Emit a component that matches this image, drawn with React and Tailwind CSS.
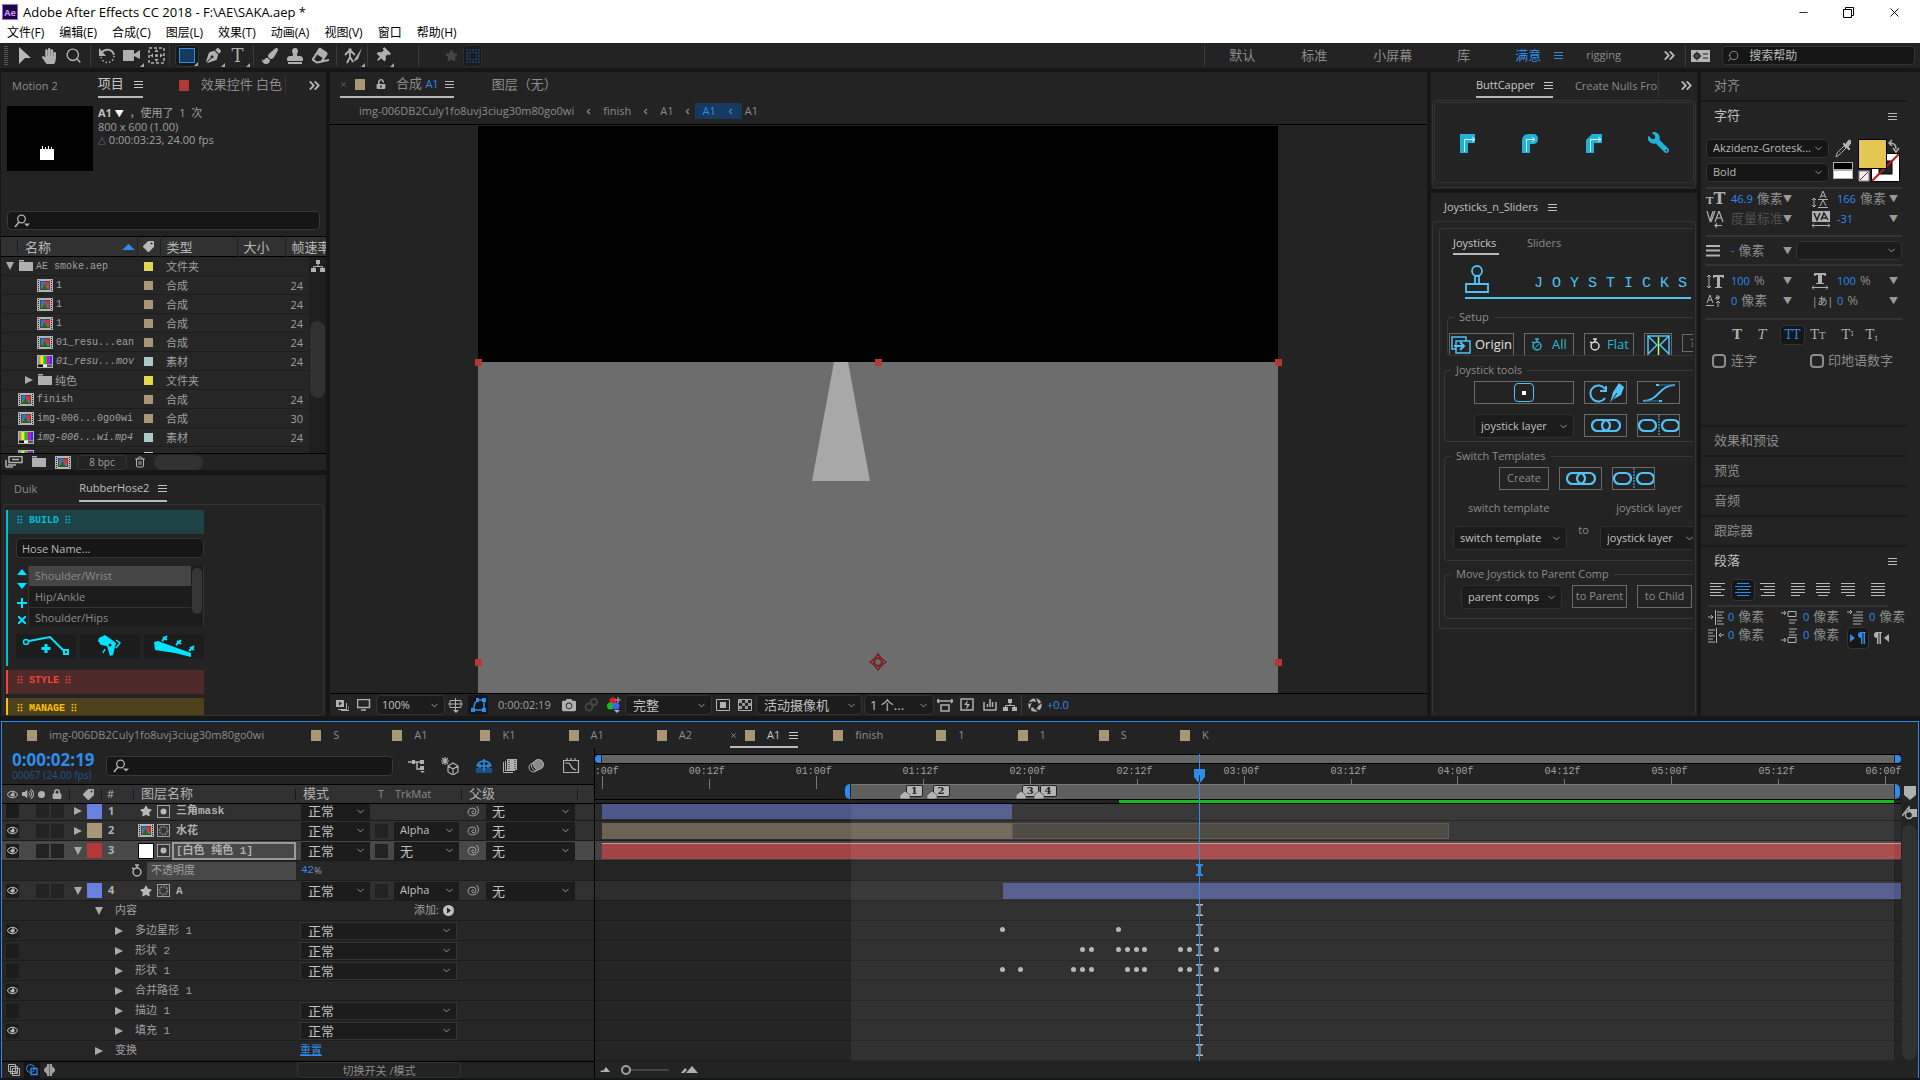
import React from 'react';
import {
  FaCamera,
  FaEraser,
  FaHandPaper,
  FaLock,
  FaPaintBrush,
  FaPenNib,
  FaRegEye,
  FaStamp,
  FaStar,
  FaTag,
  FaThumbtack,
  FaUnlockAlt,
  FaVolumeUp,
  FaWrench,
} from 'react-icons/fa';
import { ChevronDown, ChevronLeft, ChevronsRight, Minus, Search, Trash2, X } from 'lucide-react';

const MONO = "[font-family:'Liberation_Mono','Noto_Sans_CJK_SC',monospace]";
const SERIF = "[font-family:'DejaVu_Serif','Liberation_Serif',serif]";

// ---------- shared bits ----------

function Svg({ w, h, children, className = '' }) {
  return (
    <svg width={w} height={h} viewBox={`0 0 ${w} ${h}`} className={`shrink-0 ${className}`} fill="none" aria-hidden="true">
      {children}
    </svg>
  );
}

const PanelMenu = ({ className = '' }) => (
  <button type="button" aria-label="Panel menu" className={className}>
    <Svg w={9} h={9}>
      <path d="M0 1.5h9M0 4.5h9M0 7.5h9" stroke="currentColor" />
    </Svg>
  </button>
);

function Select({ label, value, className = '', chevron = 'right-1' }) {
  return (
    <span className={`relative flex shrink-0 items-center ${className}`}>
      <select aria-label={label} className="h-full w-full appearance-none bg-transparent pr-4 outline-none">
        <option>{value}</option>
      </select>
      <ChevronDown size={11} className={`pointer-events-none absolute text-[#a0a0a0] ${chevron}`} />
    </span>
  );
}

const SearchGlyph = () => (
  <Svg w={17} h={14}>
    <circle cx="7.5" cy="5" r="3.8" stroke="#b0b0b0" strokeWidth="1.3" />
    <path d="M5 8L1 13" stroke="#b0b0b0" strokeWidth="1.6" />
    <path d="M10 9.5h6l-3 3z" fill="#b0b0b0" />
  </Svg>
);

const CompIcon = () => (
  <Svg w={16} h={13}>
    <rect width="16" height="13" fill="#b4b4b4" />
    <path d="M1.5 1v11M14.5 1v11" stroke="#222" strokeDasharray="1 1" />
    <rect x="3.5" y="2.5" width="9" height="8" fill="#777" stroke="#444" />
    <circle cx="6" cy="4.5" r="2.3" fill="#2277dd" />
    <rect x="8" y="3" width="4.5" height="4.5" fill="#e03030" />
    <path d="M7.5 5l3 5h-6z" fill="#117722" />
  </Svg>
);

const FootageIcon = () => (
  <Svg w={16} h={13}>
    <rect width="16" height="13" fill="#b4b4b4" />
    <path d="M1 1h2.5v8H1z" fill="#999" />
    <path d="M3.500 1h3v8h-3z" fill="#f5ee00" />
    <path d="M6.500 1h3v8h-3z" fill="#00d020" />
    <path d="M9.500 1h3v8h-3z" fill="#ee00a8" />
    <path d="M12.500 1H15v8h-2.500z" fill="#3030ff" />
    <path d="M1 9.500h5v2.500H1z" fill="#111" />
    <path d="M6 9.500h4v2.500H6z" fill="#eee" />
    <path d="M10 9.500h5v2.500h-5z" fill="#555" />
  </Svg>
);

const FolderIcon = () => (
  <Svg w={14} h={12}>
    <path d="M0 0h5v1.500H0zM0 2h14v9H0z" fill="#b0b0b0" />
  </Svg>
);

const Twirl = ({ open }) => (
  <Svg w={8} h={8}>
    <path d={open ? 'M0 0h8L4 8z' : 'M0 0l8 4-8 4z'} fill="#aaa" />
  </Svg>
);

const FlowIcon = () => (
  <Svg w={14} h={13}>
    <path d="M5 0h4v4H5zM0 8h5v4H0zM9 8h5v4H9z" fill="#b0b0b0" />
    <path d="M7 4v2.500M2.500 8V6.500h9V8" stroke="#b0b0b0" />
  </Svg>
);

// ---------- title, menus, tools ----------

const MENUS = ['文件(F)', '编辑(E)', '合成(C)', '图层(L)', '效果(T)', '动画(A)', '视图(V)', '窗口', '帮助(H)'];

function TitleBar() {
  return (
    <header className="h-[43px] shrink-0 bg-white text-[12px] text-black">
      <div className="flex h-6 items-center">
        <div className="ml-[2px] flex h-4 w-4 items-center justify-center border border-[#9a6be0] bg-[#1f0740] text-[9px] leading-none font-bold text-[#cf96fd]">
          Ae
        </div>
        <h1 className="ml-[5px] text-[13px] leading-5">Adobe After Effects CC 2018 - F:\AE\SAKA.aep *</h1>
        <div className="ml-auto flex items-center gap-[33px] pr-[18px]">
          <button type="button" aria-label="Minimize"><Minus size={13} strokeWidth={1.5} /></button>
          <button type="button" aria-label="Restore">
            <Svg w={11} h={11}><path d="M.500 2.500h8v8h-8zM2.500 2.500v-2h8v8h-2" stroke="#000" /></Svg>
          </button>
          <button type="button" aria-label="Close"><X size={15} strokeWidth={1.5} /></button>
        </div>
      </div>
      <nav className="flex h-[18px] items-center gap-[15px] pl-[7px]">
        {MENUS.map((m) => (
          <button key={m} type="button" className="leading-[18px]">{m}</button>
        ))}
      </nav>
    </header>
  );
}

const Sep = () => <span className="h-[21px] w-px shrink-0 bg-[#3a3a3a]" />;

function Tool({ label, children, corner, active, className = 'w-[25px]' }) {
  return (
    <button
      type="button"
      aria-label={label}
      className={`relative flex h-[22px] shrink-0 items-center justify-center ${active ? 'rounded-sm border border-[#333] bg-[#161616]' : ''} ${className}`}
    >
      {children}
      {corner && (
        <svg width="4" height="4" className="absolute right-0 bottom-0"><path d="M4 0v4H0z" fill="#aaa" /></svg>
      )}
    </button>
  );
}

function Toolbar() {
  return (
    <div className="flex h-[25px] shrink-0 items-center bg-[#232323] text-[#b0b0b0]">
      <Svg w={4} h={19} className="ml-1">
        <path d="M2 0v19" stroke="#555" strokeWidth="4" strokeDasharray="1 1" />
      </Svg>
      <Tool label="Selection" className="ml-1 w-6">
        <Svg w={13} h={17}><path d="M1 0l12 11H7l-6 6z" fill="#b8b8b8" /></Svg>
      </Tool>
      <Tool label="Hand"><FaHandPaper size={16} /></Tool>
      <Tool label="Zoom"><Search size={17} strokeWidth={2} /></Tool>
      <span className="w-1" /><Sep />
      <Tool label="Rotate" className="ml-1 w-6">
        <Svg w={17} h={17}>
          <path d="M3 5a7 7 0 0 1 12 3" stroke="#b0b0b0" strokeWidth="2" />
          <path d="M15 9a6.500 6.500 0 1 1-13 0" stroke="#b0b0b0" strokeWidth="1.5" strokeDasharray="1.5 2" />
          <path d="M0 1v8h7z" fill="#b0b0b0" />
        </Svg>
      </Tool>
      <Tool label="Camera" corner>
        <Svg w={18} h={14}><path d="M0 1h11v4l6-4v9l-6-3v5H0z" fill="#b0b0b0" /></Svg>
      </Tool>
      <Tool label="Pan behind">
        <Svg w={17} h={17}>
          <rect x="1" y="1" width="15" height="15" stroke="#b0b0b0" strokeWidth="1.500" strokeDasharray="3 2" />
          <path d="M8.500 2l2 3h-4zM8.500 15l2-3h-4zM2 8.500l3-2v4zM15 8.500l-3-2v4z" fill="#b0b0b0" />
          <circle cx="8.500" cy="8.500" r="1.500" fill="#b0b0b0" />
        </Svg>
      </Tool>
      <Sep />
      <Tool label="Rectangle" active corner className="ml-[5px] w-6">
        <span className="h-[15px] w-4 border border-[#2d8ceb] bg-[#16395e]" />
      </Tool>
      <Tool label="Pen" corner className="ml-[2px] w-6"><FaPenNib size={15} /></Tool>
      <Tool label="Type" corner><span className={`text-[18px] leading-none ${SERIF}`}>T</span></Tool>
      <span className="w-[3px]" /><Sep />
      <Tool label="Brush" className="ml-1 w-6"><FaPaintBrush size={16} /></Tool>
      <Tool label="Clone stamp"><FaStamp size={16} /></Tool>
      <Tool label="Eraser"><FaEraser size={17} className="-rotate-12" /></Tool>
      <span className="w-1" /><Sep />
      <Tool label="Roto brush" corner className="ml-1 w-6">
        <Svg w={19} h={17}>
          <circle cx="6" cy="3" r="1.800" fill="#b0b0b0" />
          <path d="M1 8l3-3h4l3 3M6 5v5l-3 6M6 10l3 5" stroke="#b0b0b0" strokeWidth="1.800" />
          <path d="M18 1l-6 9-3 5 5-3z" fill="#b0b0b0" />
        </Svg>
      </Tool>
      <span className="w-[2px]" /><Sep />
      <Tool label="Puppet pin" corner className="ml-[2px] w-6"><FaThumbtack size={15} className="rotate-45" /></Tool>
      <span className="w-6" /><Sep />
      <Tool label="Shape" className="ml-5 w-6 text-[#444]"><FaStar size={13} /></Tool>
      <Tool label="Mask" className="w-[19px] rounded-sm border border-[#2c2c2c] bg-[#1a1a1a]">
        <Svg w={14} h={14}>
          <path d="M0 1h14M0 4h14M0 7h14M0 10h14M0 13h14" stroke="#17395e" strokeWidth="2" strokeDasharray="2 1" />
          <circle cx="7" cy="7" r="4" fill="#1a1a1a" stroke="#17395e" />
        </Svg>
      </Tool>

      <div className="ml-auto flex items-center text-[13px] text-[#8c8c8c]">
        <Sep />
        <button type="button" className="ml-6">默认</button>
        <button type="button" className="ml-[46px]">标准</button>
        <button type="button" className="ml-[46px]">小屏幕</button>
        <button type="button" className="ml-[45px]">库</button>
        <button type="button" className="ml-[45px] text-[#2d8ceb]">满意</button>
        <PanelMenu className="ml-[13px] text-[#2d8ceb]" />
        <button type="button" className="ml-[23px] text-[11px]">rigging</button>
        <ChevronsRight size={17} strokeWidth={2.5} className="ml-10 text-[#b8b8b8]" />
        <span className="w-[7px]" /><Sep />
        <button type="button" aria-label="Workspace settings" className="ml-[5px]">
          <Svg w={19} h={12}>
            <rect width="19" height="12" fill="#b4b4b4" />
            <circle cx="6" cy="6" r="2.500" stroke="#222" strokeWidth="1.500" />
            <path d="M6 1.500v9M1.500 6h9M12 4h5M12 8h5" stroke="#222" />
          </Svg>
        </button>
        <label className="mr-[5px] ml-3 flex h-[19px] w-[193px] items-center rounded-sm border border-[#333] bg-[#161616] pl-1 text-[12px]">
          <Search size={14} strokeWidth={1.500} className="-scale-x-100 text-[#b0b0b0]" />
          <input aria-label="搜索帮助" placeholder="搜索帮助" className="ml-[10px] w-full bg-transparent outline-none placeholder:text-[#b8b8b8]" />
        </label>
      </div>
    </div>
  );
}

// ---------- project ----------

const SWATCH = { yellow: 'bg-[#e3d84c]', sand: 'bg-[#a89677]', teal: 'bg-[#a9cac7]' };

const PROJECT_ITEMS = [
  { indent: 'pl-[5px]', twirl: 'open', kind: 'folder', name: 'AE smoke.aep', swatch: 'yellow', type: '文件夹' },
  { indent: 'pl-[36px]', kind: 'comp', name: '1', swatch: 'sand', type: '合成', fps: 24 },
  { indent: 'pl-[36px]', kind: 'comp', name: '1', swatch: 'sand', type: '合成', fps: 24 },
  { indent: 'pl-[36px]', kind: 'comp', name: '1', swatch: 'sand', type: '合成', fps: 24 },
  { indent: 'pl-[36px]', kind: 'comp', name: '01_resu...ean', swatch: 'sand', type: '合成', fps: 24 },
  { indent: 'pl-[36px]', kind: 'footage', name: '01_resu...mov', swatch: 'teal', type: '素材', fps: 24 },
  { indent: 'pl-[24px]', twirl: 'closed', kind: 'folder', name: '纯色', cjk: true, swatch: 'yellow', type: '文件夹' },
  { indent: 'pl-[17px]', kind: 'comp', name: 'finish', swatch: 'sand', type: '合成', fps: 24 },
  { indent: 'pl-[17px]', kind: 'comp', name: 'img-006...0go0wi', swatch: 'sand', type: '合成', fps: 30 },
  { indent: 'pl-[17px]', kind: 'footage', name: 'img-006...wi.mp4', swatch: 'teal', type: '素材', fps: 24 },
  { indent: 'pl-[17px]', kind: 'footage', name: '', swatch: 'teal', type: '' },
];

function ProjectPanel() {
  return (
    <section className="flex h-[398px] shrink-0 flex-col overflow-hidden bg-[#232323]">
      <div className="flex h-[26px] shrink-0 items-stretch text-[13px] whitespace-nowrap text-[#8c8c8c]">
        <button type="button" className="mt-[2px] ml-[11px] shrink-0 text-[11px]">Motion 2</button>
        <div className="ml-10 flex shrink-0 items-center gap-[10px] border-b-2 border-[#b8b8b8] text-[#c8c8c8]">
          <button type="button">项目</button>
          <PanelMenu />
        </div>
        <span className="ml-[36px] h-[11px] w-[10px] shrink-0 self-center bg-[#b53838]" />
        <button type="button" className="ml-3 shrink-0">效果控件 白色</button>
        <span className="ml-[3px] h-5 w-px self-center bg-[#333]" />
        <ChevronsRight size={17} strokeWidth={2.5} className="mr-[3px] ml-auto shrink-0 self-center text-[#b8b8b8]" />
      </div>

      <div className="mt-2 flex shrink-0 pl-[6px] text-[11px] text-[#a0a0a0]">
        <div className="flex h-[65px] w-[86px] items-end justify-center bg-black pr-[5px] pb-[11px]">
          <Svg w={15} h={14}><path d="M0 3h2V0h1v3h2V1h1v2h2V0h1v3h2V1h1v2h2v11H0z" fill="#fff" /></Svg>
        </div>
        <div className="ml-[5px] leading-[13px]">
          <p><b className="text-[#c0c0c0]">A1</b> <span className="text-[9px] text-white">▼</span>&nbsp; ，使用了&nbsp; 1&nbsp; 次</p>
          <p>800 x 600 (1.00)</p>
          <p><span className="text-[8px]">△</span> 0:00:03:23, 24.00 fps</p>
        </div>
      </div>

      <label className="mt-10 mr-[6px] ml-[6px] flex h-[19px] shrink-0 items-center rounded-sm border border-[#383838] bg-[#161616] pl-[6px]">
        <SearchGlyph />
        <input aria-label="Search project" className="w-full bg-transparent text-[11px] text-[#b8b8b8] outline-none" />
      </label>

      <div className="mt-[6px] flex min-h-0 flex-1">
        <div className="min-w-0 flex-1 overflow-hidden">
          <table className="w-full table-fixed text-left text-[11px] text-[#a0a0a0]">
            <thead>
              <tr className="h-5 border-y border-black bg-[#313131] text-[13px] leading-4 text-[#b8b8b8]">
                <th className="w-[136px] p-0 font-normal">
                  <span className="flex items-center pr-[2px] pl-4">
                    <span className="h-3 w-px bg-[#1a1a1a]" />
                    <span className="ml-[7px] flex-1">名称</span>
                    <Svg w={13} h={6}><path d="M0 6L6.500 0 13 6z" fill="#2d8ceb" /></Svg>
                  </span>
                </th>
                <th className="w-[23px] border-l border-[#222] p-0 font-normal"><FaTag size={11} className="mx-auto -scale-x-100" aria-label="Label" /></th>
                <th className="w-[77px] border-l border-[#222] p-0 pl-[6px] font-normal">类型</th>
                <th className="w-[48px] border-l border-[#222] p-0 pl-[6px] font-normal">大小</th>
                <th className="overflow-hidden border-l border-[#222] p-0 pl-[6px] font-normal whitespace-nowrap">帧速率</th>
              </tr>
            </thead>
            <tbody>
              {PROJECT_ITEMS.map((item, i) => (
                <tr key={i} className="h-[19px] border-b border-[#1d1d1d] bg-[#262626]">
                  <td className="p-0">
                    <span className={`flex items-center ${item.indent}`}>
                      {item.twirl && <span className="mr-[5px]"><Twirl open={item.twirl === 'open'} /></span>}
                      {item.kind === 'folder' && <FolderIcon />}
                      {item.kind === 'comp' && <CompIcon />}
                      {item.kind === 'footage' && <FootageIcon />}
                      <span className={`ml-[3px] leading-[13px] whitespace-nowrap ${item.cjk ? 'text-[11px]' : `text-[10px] ${MONO}`} ${item.kind === 'footage' ? 'italic' : ''}`}>
                        {item.name}
                      </span>
                    </span>
                  </td>
                  <td className="p-0"><span className={`mx-auto block h-[9px] w-[9px] ${SWATCH[item.swatch]}`} /></td>
                  <td className="p-0 pl-[6px] leading-[13px]">{item.type}</td>
                  <td className="p-0" />
                  <td className="p-0 pr-[23px] text-right leading-[13px]">{item.fps}</td>
                </tr>
              ))}
            </tbody>
          </table>
        </div>
      </div>
      <div className="relative flex h-[17px] shrink-0 items-center border-t border-black pl-1">
        {/* scroll bar and flowchart button float over the list's right edge */}
        <div className="absolute right-0 bottom-[17px] flex h-[196px] w-[17px] flex-col items-center bg-[#1e1e1e] pt-[3px]">
          <FlowIcon />
          <span className="mt-[48px] h-[77px] w-[15px] rounded-full bg-[#313131]" />
        </div>
        <Svg w={18} h={12}>
          <path d="M4 .5h13v6H4zM7 3.500h7M1 4v7M3 9h8M1 11h7" stroke="#b0b0b0" strokeWidth="1.500" />
        </Svg>
        <span className="ml-[9px]"><FolderIcon /></span>
        <span className="ml-[9px]"><CompIcon /></span>
        <button type="button" className="ml-[6px] h-[15px] w-[50px] rounded-sm border border-[#333] text-[10px] leading-none text-[#a0a0a0]">8 bpc</button>
        <Trash2 size={12} className="ml-[7px] text-[#b0b0b0]" />
        <span className="ml-2 h-[15px] w-[49px] rounded-full bg-[#313131]" />
      </div>
    </section>
  );
}

// ---------- rubber hose ----------

function HoseHeader({ title, tone }) {
  return (
    <h2 className={`flex h-6 w-[198px] items-center border-l-2 pb-1 pl-[9px] text-[10px] font-bold ${MONO} ${tone}`}>
      ⁝⁝ {title} ⁝⁝
    </h2>
  );
}

function RubberHosePanel() {
  return (
    <section className="flex min-h-0 flex-1 flex-col overflow-hidden bg-[#232323]">
      <div className="flex h-[27px] shrink-0 text-[11px] text-[#8c8c8c]">
        <button type="button" className="ml-[13px] pt-[2px]">Duik</button>
        <div className="ml-[42px] flex items-center gap-[9px] border-b-2 border-[#b8b8b8] pt-[2px] text-[#c0c0c0]">
          <button type="button">RubberHose2</button>
          <PanelMenu />
        </div>
      </div>
      <div className="mt-[2px] mr-[2px] ml-[2px] flex min-h-0 flex-1 flex-col overflow-hidden rounded-sm border border-[#333] pt-[5px] pl-[2px]">
        <div className="h-[156px] w-[198px] shrink-0 border-l-2 border-[#00bcd4]">
          <h2 className={`flex h-6 items-center bg-[#1d4347] pb-1 pl-[9px] text-[10px] font-bold text-[#00bcd4] ${MONO}`}>⁝⁝ BUILD ⁝⁝</h2>
          <input
            aria-label="Hose name"
            placeholder="Hose Name..."
            className="mt-1 ml-2 block h-5 w-[188px] rounded-sm border border-[#333] bg-[#161616] px-[5px] text-[11px] placeholder:text-[#b8b8b8]"
          />
          <div className="mt-2 ml-2 flex h-[60px] overflow-hidden">
            <div className="flex w-3 flex-col items-center justify-between pt-[3px] pb-[2px]">
              <Svg w={10} h={6}><path d="M0 6l5-6 5 6z" fill="#00e5ff" /></Svg>
              <Svg w={10} h={6}><path d="M0 0l5 6 5-6z" fill="#00e5ff" /></Svg>
              <Svg w={10} h={10}><path d="M5 0v10M0 5h10" stroke="#00e5ff" strokeWidth="2" /></Svg>
              <Svg w={8} h={8}><path d="M0 0l8 8M8 0L0 8" stroke="#00e5ff" strokeWidth="2" /></Svg>
            </div>
            <ul className="w-[163px] border-l border-[#333] bg-[#1c1c1c] text-[11px] leading-5 text-[#8c8c8c]">
              <li className="bg-[#454545] pl-[6px]">Shoulder/Wrist</li>
              <li className="mt-px border-b border-[#333] pl-[6px]">Hip/Ankle</li>
              <li className="pl-[6px]">Shoulder/Hips</li>
            </ul>
            <div className="w-[13px] border-r border-[#333] bg-[#1c1c1c] pt-[2px] pl-px">
              <span className="block h-[46px] w-[10px] rounded-full bg-[#363636]" />
            </div>
          </div>
          <div className="mt-2 ml-2 flex gap-1">
            <button type="button" aria-label="New hose" className="flex h-6 w-[60px] items-center justify-center bg-[#1c1c1c]">
              <Svg w={48} h={22}>
                <circle cx="4" cy="7" r="2.500" stroke="#00e5ff" strokeWidth="1.500" />
                <path d="M7 6l21-4 14 14" stroke="#00e5ff" strokeWidth="2" />
                <path d="M42 15h4v4h-4z" stroke="#00e5ff" strokeWidth="2" />
                <path d="M24 9v9M19.500 13.500h9" stroke="#00e5ff" strokeWidth="3" />
              </Svg>
            </button>
            <button type="button" aria-label="Rubber rig" className="flex h-6 w-[60px] items-center justify-center bg-[#1c1c1c]">
              <Svg w={24} h={22}>
                <path d="M1 3l6-3 7 5 4 3-3 12-3 1-3-10-6-1-3-4z" fill="#00e5ff" />
                <path d="M18 5l4 3-4 5M7 14l-2 4" stroke="#00e5ff" strokeWidth="1.500" />
                <circle cx="12" cy="10" r="1.500" fill="#1c1c1c" />
              </Svg>
            </button>
            <button type="button" aria-label="Rubber pin" className="flex h-6 w-[60px] items-center justify-center bg-[#1c1c1c]">
              <Svg w={42} h={22}>
                <path d="M1 7l4-1 19 7 14 5v4l-16-4-20-3z" fill="#00e5ff" />
                <path d="M9 6l5-5M10 2l4 3M23 10l5-5M24 6l4 3M36 16l5-5M37 12l4 3" stroke="#00e5ff" strokeWidth="2" />
              </Svg>
            </button>
          </div>
        </div>
        <div className="mt-1 shrink-0"><HoseHeader title="STYLE" tone="border-[#f44336] bg-[#4e2a29] text-[#f44336]" /></div>
        <div className="mt-1"><HoseHeader title="MANAGE" tone="border-[#ffc107] bg-[#4e421c] text-[#ffc107]" /></div>
      </div>
    </section>
  );
}

// ---------- viewer ----------

function CompositionView() {
  return (
    <svg width="800" height="568" viewBox="0 0 800 568" className="shrink-0 overflow-visible" role="img" aria-label="A1">
      <rect width="800" height="568" fill="#6d6d6d" />
      <rect width="800" height="236" fill="#000" />
      <path d="M356 236h14l22 119h-58z" fill="#a8a8a8" />
      <path d="M-3 233h7v7h-7zM397 233h7v7h-7zM797 233h7v7h-7zM-3 533h7v7h-7zM797 533h7v7h-7z" fill="#b53838" />
      <g stroke="#7a2222" fill="none" strokeWidth="1.500">
        <circle cx="400" cy="536" r="3.500" />
        <path d="M400 528l3 4h-6zM400 544l3-4h-6zM392 536l4-3v6zM408 536l-4-3v6z" />
      </g>
    </svg>
  );
}

function ViewerPanel() {
  const box = 'h-5 rounded-sm border border-[#333] bg-[#1c1c1c] text-[13px] text-[#c0c0c0]';
  return (
    <section className="flex min-w-0 flex-1 flex-col bg-[#232323]">
      <div className="flex h-[26px] shrink-0 text-[13px] text-[#8c8c8c]">
        <div className="ml-[10px] flex items-center border-b-2 border-[#b8b8b8]">
          <X size={7} />
          <span className="ml-[8px] h-[11px] w-[10px] bg-[#a89677]" />
          <FaUnlockAlt size={10} className="ml-[11px] text-[#b0b0b0]" />
          <button type="button" className="ml-[10px]">合成 <span className="text-[11px] text-[#2d8ceb]">A1</span></button>
          <PanelMenu className="ml-[6px] text-[#b8b8b8]" />
        </div>
        <button type="button" className="ml-[38px]">图层（无）</button>
      </div>
      <nav className="flex h-[26px] shrink-0 items-center gap-[10px] pl-[29px] text-[11px] text-[#8c8c8c]">
        <a href="#img">img-006DB2Culy1fo8uvj3ciug30m80go0wi</a>
        <ChevronLeft size={9} strokeWidth={3} />
        <a href="#finish">finish</a>
        <ChevronLeft size={9} strokeWidth={3} />
        <a href="#a1">A1</a>
        <ChevronLeft size={9} strokeWidth={3} />
        <span className="-mx-[7px] flex h-4 items-center gap-[10px] bg-[#17395e] px-[7px] text-[#2d8ceb]">
          <a href="#a1-current">A1</a>
          <ChevronLeft size={9} strokeWidth={3} />
        </span>
        <a href="#a1-child">A1</a>
      </nav>
      <div className="flex min-h-0 flex-1 justify-center overflow-hidden border-y border-black pt-px pr-[2px]">
        <CompositionView />
      </div>
      <div className="flex h-[22px] shrink-0 items-center pl-[5px] text-[11px] text-[#b0b0b0]">
        <Svg w={14} h={12}>
          <path d="M1 1h8v7H1z" fill="#b0b0b0" /><path d="M3 10.500h8.500V4M6 11.500h8V7" stroke="#b0b0b0" />
          <path d="M4 2.500l3 2-3 2z" fill="#222" />
        </Svg>
        <Svg w={14} h={12} className="ml-2"><path d="M.5.5h12v8H.5zM4 11h5" stroke="#b0b0b0" strokeWidth="1.500" /></Svg>
        <Select label="Magnification" value="100%" className="ml-[5px] h-5 w-[69px] rounded-sm border border-[#333] bg-[#1c1c1c] pl-[5px] text-[11px] text-[#c0c0c0]" />
        <Svg w={15} h={15} className="ml-[3px]">
          <path d="M2 2.500h11v7H2zM7.500 0v12M0 6h15" stroke="#b0b0b0" /><path d="M5 12h6l-3 3z" fill="#b0b0b0" />
        </Svg>
        <span className="ml-[5px] flex h-5 w-5 items-center justify-center rounded-sm bg-[#161616]">
          <Svg w={15} h={14}>
            <path d="M2 12L4 5l3-3h6v10z" stroke="#2d8ceb" strokeWidth="1.500" />
            <path d="M0 10h4v4H0zM11 10h4v4h-4zM11 0h4v4h-4zM5 0h3v4H5z" fill="#2d8ceb" />
          </Svg>
        </span>
        <span className="ml-[10px] w-[51px] text-[#a0a0a0]">0:00:02:19</span>
        <FaCamera size={14} className="ml-[13px]" />
        <Svg w={14} h={14} className="ml-[8px]"><circle cx="5" cy="9" r="3.500" stroke="#444" strokeWidth="2" /><circle cx="10" cy="4" r="3" stroke="#444" strokeWidth="2" /></Svg>
        <Svg w={15} h={16} className="ml-[9px]">
          <circle cx="6" cy="4" r="3.500" fill="#e02020" /><circle cx="3.500" cy="9" r="3.500" fill="#10c020" /><circle cx="9" cy="9" r="3.500" fill="#4060ff" />
          <path d="M11 0v6M8 3h6" stroke="#b0b0b0" /><path d="M7 13h6l-3 3z" fill="#b0b0b0" />
        </Svg>
        <Select label="Resolution" value="完整" className={`ml-[3px] w-[87px] pl-[7px] ${box}`} />
        <Svg w={14} h={12} className="ml-1"><path d="M.5.5h13v11H.5z" stroke="#b0b0b0" /><path d="M4 3h6v6H4z" fill="#b0b0b0" /></Svg>
        <Svg w={14} h={12} className="ml-2">
          <path d="M.5.5h13v11H.5z" stroke="#b0b0b0" />
          <path d="M1 2.500h12M1 8.500h12" stroke="#999" strokeWidth="3" strokeDasharray="3 3" />
          <path d="M4 5.500h9" stroke="#999" strokeWidth="3" strokeDasharray="3 3" />
        </Svg>
        <Select label="Camera" value="活动摄像机" className={`ml-1 w-[106px] pl-[7px] ${box}`} />
        <Select label="View layout" value="1 个..." className={`ml-[2px] w-[70px] pl-[5px] ${box}`} />
        <Svg w={16} h={13} className="ml-[3px]"><path d="M4 6h8v6H4zM0 2h16M2 0L0 2l2 2M14 0l2 2-2 2" stroke="#b0b0b0" strokeWidth="1.500" /></Svg>
        <Svg w={14} h={14} className="ml-[7px]"><path d="M1 1h12v11H1z" stroke="#b0b0b0" strokeWidth="1.500" /><path d="M8 2L4 7h3l-1 5 4-6H7z" fill="#b0b0b0" /></Svg>
        <Svg w={14} h={12} className="ml-[9px]"><path d="M1 3v8h12V3M4.500 5v3M7 0v8M9.500 3v5" stroke="#b0b0b0" strokeWidth="1.500" /></Svg>
        <span className="ml-[6px]"><FlowIcon /></span>
        <span className="mx-[4px] h-5 w-px bg-[#3a3a3a]" />
        <Svg w={14} h={14} className="ml-[2px]">
          <circle cx="7" cy="7" r="5" stroke="#b0b0b0" strokeWidth="3.500" />
          <path d="M7 0l3 6M13 5l-5 4M11 13l-5-3M2 12l2-6M1 5l5-1" stroke="#232323" strokeWidth="1.500" />
        </Svg>
        <span className="ml-[5px] text-[#2d8ceb]">+0.0</span>
      </div>
    </section>
  );
}

// ---------- scripts column ----------

function ButtCapperPanel() {
  return (
    <section className="flex h-[117px] shrink-0 flex-col overflow-hidden bg-[#232323] p-px pt-0">
      <div className="flex h-[26px] shrink-0 text-[11px] whitespace-nowrap text-[#8c8c8c]">
        <div className="ml-[44px] flex shrink-0 items-center gap-[9px] border-b-2 border-[#b8b8b8] pt-[2px] text-[#c8c8c8]">
          <button type="button">ButtCapper</button>
          <PanelMenu />
        </div>
        <button type="button" className="ml-[22px] w-[84px] shrink-0 overflow-hidden border-r border-[#333] pt-[2px] text-left">Create Nulls From</button>
        <ChevronsRight size={17} strokeWidth={2.5} className="mr-px ml-auto shrink-0 self-center text-[#b8b8b8]" />
      </div>
      <div className="mt-[2px] flex-1 rounded-sm border border-[#333] p-px pb-1">
        <div className="flex h-full items-center justify-between rounded-sm border border-[#333] pr-[24px] pl-[24px]">
          <button type="button" aria-label="Butt cap"><Svg w={17} h={20}><path d="M1 1h15v9H9v10H1z" fill="#22b2d8" /><path d="M5.500 19V6.500H16M13 4l3 2.500L13 9" stroke="#d8f4fb" /></Svg></button>
          <button type="button" aria-label="Round cap"><Svg w={18} h={20}><path d="M1 20V7q1-6 6-6h5q5 0 5 5t-5 5H9v9z" fill="#22b2d8" /><path d="M5.500 19V6.500H14M11 4l3 2.500L11 9" stroke="#d8f4fb" /></Svg></button>
          <button type="button" aria-label="Bevel cap"><Svg w={18} h={20}><path d="M1 20V7l6-6h10v9H9v10z" fill="#22b2d8" /><path d="M5.500 19V6.500H16M13 4l3 2.500L13 9" stroke="#d8f4fb" /></Svg></button>
          <button type="button" aria-label="Settings"><FaWrench size={21} className="-scale-x-100 text-[#22b2d8]" /></button>
        </div>
      </div>
    </section>
  );
}

const LinkIcon = () => (
  <Svg w={30} h={14}>
    <rect x="1" y="1" width="18" height="11" rx="5.500" stroke="#4fc3f7" strokeWidth="2.200" />
    <rect x="11" y="1" width="18" height="11" rx="5.500" stroke="#4fc3f7" strokeWidth="2.200" />
  </Svg>
);

const UnlinkIcon = () => (
  <Svg w={41} h={21}>
    <rect x="1" y="5" width="17" height="11" rx="5.500" stroke="#4fc3f7" strokeWidth="2.200" />
    <rect x="24" y="5" width="17" height="11" rx="5.500" stroke="#4fc3f7" strokeWidth="2.200" />
    <path d="M21 0v21" stroke="#4fc3f7" strokeDasharray="2 1" />
  </Svg>
);

const JButton = ({ label, children, className = 'w-[43px]' }) => (
  <button type="button" aria-label={label} className={`flex h-[23px] shrink-0 items-center justify-center overflow-hidden border border-[#6a6a6a] text-[11px] text-[#8c8c8c] ${className}`}>
    {children}
  </button>
);

const Group = ({ title, className = '', children }) => (
  <fieldset className={`min-w-0 shrink-0 overflow-hidden rounded-l-sm border border-r-0 border-[#383838] text-[11px] text-[#8c8c8c] ${className}`}>
    <legend className="ml-[6px] px-[5px] leading-[14px]">{title}</legend>
    {children}
  </fieldset>
);

const Stopwatch = ({ color, slash }) => (
  <Svg w={12} h={13}>
    <circle cx="6" cy="8" r="4" stroke={color} strokeWidth="1.500" />
    <path d="M4 1h4M6 1v3M1 4l2 1" stroke={color} strokeWidth="1.500" />
    {slash && <path d="M4 10l4-4" stroke={color} />}
  </Svg>
);

function JoysticksPanel() {
  const drop = 'h-6 rounded-sm border border-[#303030] bg-[#1c1c1c] text-[11px] text-[#c0c0c0]';
  return (
    <section className="flex min-h-0 flex-1 flex-col bg-[#232323] p-px pt-0">
      <h2 className="flex h-7 shrink-0 items-center gap-[10px] pl-[12px] text-[11px] text-[#c0c0c0]">
        Joysticks_n_Sliders <PanelMenu />
      </h2>
      <div className="flex-1 overflow-hidden rounded-sm border border-b-0 border-[#333] pt-[6px] pr-[2px] pl-[6px]">
        <div className="flex h-[401px] flex-col overflow-hidden rounded-l-sm border border-r-0 border-[#383838]">
          <div className="flex h-[26px] shrink-0 text-[11px]">
            <button type="button" className="ml-[13px] w-[46px] border-b-2 border-[#b8b8b8] pt-[4px] text-left text-[#c8c8c8]">Joysticks</button>
            <button type="button" className="ml-7 pt-[2px] text-[#8c8c8c]">Sliders</button>
          </div>
          <div className="mt-[7px] mr-[2px] ml-[25px] flex h-[37px] shrink-0 items-end justify-between border-b-2 border-[#4fc3f7] pr-[4px] pb-[3px]">
            <Svg w={25} h={29}>
              <circle cx="12" cy="6" r="5" stroke="#4fc3f7" strokeWidth="1.800" />
              <path d="M10 11v8M14 11v8M1 19h22v8H1z" stroke="#4fc3f7" strokeWidth="1.800" />
            </Svg>
            <span className={`text-[15px] leading-[20px] text-[#4fc3f7] ${MONO}`}>J O Y S T I C K S</span>
          </div>

          <Group title="Setup" className="mt-[11px] ml-[7px] h-[46px]">
            <div className="flex items-start gap-[10px] pt-[9px] pl-px">
              <JButton label="Origin" className="w-[65px] gap-1 text-[13px]!">
                <Svg w={20} h={18}>
                  <path d="M5 13H1V1h14v4M5 5h14v12H5z" stroke="#4fc3f7" strokeWidth="1.500" />
                  <path d="M3 10h9M9 6l4 4-4 4" stroke="#4fc3f7" strokeWidth="2" />
                </Svg>
                <span className="text-[#e0e0e0]">Origin</span>
              </JButton>
              <JButton label="All" className="w-[50px] gap-[9px] text-[13px]!"><Stopwatch color="#29b6d8" slash /><span className="text-[#29b6d8]">All</span></JButton>
              <JButton label="Flat" className="w-[50px] gap-[6px] text-[13px]!"><Stopwatch color="#d8d8d8" /><span className="text-[#29b6d8]">Flat</span></JButton>
              <JButton label="Mirror" className="w-7">
                <Svg w={23} h={20}>
                  <path d="M1 1l9 9-9 9zM22 1l-9 9 9 9zM1 1h21" stroke="#4fc3f7" strokeWidth="1.500" />
                  <path d="M11.500 2v18" stroke="#b2ff59" strokeWidth="1.500" />
                </Svg>
              </JButton>
              <JButton label="Help" className="mt-px h-[18px]! w-[21px]">?</JButton>
            </div>
          </Group>

          <Group title="Joystick tools" className="mt-[7px] ml-1 h-[79px]">
            <div className="flex gap-[10px] pt-1 pl-[29px]">
              <JButton label="Controller" className="w-[100px]">
                <span className="flex h-[19px] w-5 items-center justify-center rounded-sm border border-[#4fc3f7]"><span className="h-1 w-1 bg-white" /></span>
              </JButton>
              <JButton label="Redraw">
                <Svg w={38} h={20}>
                  <path d="M18 6a8 8 0 1 0 0 9M13 8h6V3" stroke="#4fc3f7" strokeWidth="2" />
                  <path d="M32 0l5 4-3 8-7 4-4 4 3-11z" fill="#4fc3f7" />
                  <path d="M24 19l6-9" stroke="#232323" />
                </Svg>
              </JButton>
              <JButton label="Ease">
                <Svg w={34} h={20}>
                  <path d="M1 18c16 0 16-16 32-16" stroke="#4fc3f7" strokeWidth="1.800" />
                  <path d="M1 18h18M15 2h18" stroke="#2f7fa5" />
                  <path d="M17 17h3v2h-3zM14 1h3v2h-3z" fill="#4fc3f7" />
                </Svg>
              </JButton>
            </div>
            <div className="flex gap-[10px] pt-[10px] pl-[29px]">
              <Select label="Joystick layer" value="joystick layer" className={`w-[100px] pl-[6px] ${drop}`} />
              <JButton label="Link"><LinkIcon /></JButton>
              <JButton label="Unlink"><UnlinkIcon /></JButton>
            </div>
          </Group>

          <Group title="Switch Templates" className="mt-[7px] ml-1 h-[112px]">
            <div className="flex gap-[10px] pt-1 pl-[54px]">
              <JButton label="Create" className="w-[50px]">Create</JButton>
              <JButton label="Link switch"><LinkIcon /></JButton>
              <JButton label="Unlink switch"><UnlinkIcon /></JButton>
            </div>
            <div className="mt-[10px] flex justify-between pr-[11px] pl-[23px] leading-4">
              <span>switch template</span>
              <span>joystick layer</span>
            </div>
            <div className="mt-[8px] flex w-[300px] items-start pl-[8px]">
              <Select label="Switch template" value="switch template" className={`mt-[2px] w-[114px] pl-[6px] ${drop}`} />
              <span className="w-[33px] text-center leading-3">to</span>
              <Select label="Target layer" value="joystick layer" className={`mt-[2px] w-[100px] pl-[6px] ${drop}`} />
            </div>
          </Group>

          <Group title="Move Joystick to Parent Comp" className="mt-[6px] ml-1 h-[52px]">
            <div className="flex gap-[10px] pt-1 pl-4">
              <Select label="Parent comps" value="parent comps" className={`w-[101px] pl-[6px] ${drop}`} />
              <JButton label="to Parent" className="w-[55px] whitespace-nowrap">to Parent</JButton>
              <JButton label="to Child" className="w-[55px] whitespace-nowrap">to Child</JButton>
            </div>
          </Group>
        </div>
      </div>
    </section>
  );
}

// ---------- character & paragraph column ----------

const Caret = () => <span className="ml-auto text-[9px] text-[#9a9a9a]">▼</span>;

function Metric({ icon, value, unit, dim, caret = true, className = '' }) {
  return (
    <div className={`flex h-5 items-center text-[13px] whitespace-nowrap ${className}`}>
      <span className="flex w-[25px] shrink-0 justify-start text-[#b0b0b0]">{icon}</span>
      {value && <span className="mr-1 text-[11px] text-[#2d8ceb]">{value}</span>}
      <span className={dim ? 'text-[#505050]' : 'text-[#8c8c8c]'}>{unit}</span>
      {caret && <Caret />}
    </div>
  );
}

const PairRow = ({ children }) => <div className="grid grid-cols-[86px_86px] gap-5">{children}</div>;

function CharacterPanel() {
  const t = `leading-none ${SERIF}`;
  const font = 'h-[19px] w-[123px] rounded-sm border border-[#333] bg-[#161616] pl-[6px] text-[11px] text-[#b8b8b8]';
  return (
    <div className="mr-[18px] pl-[5px] text-[#8c8c8c]">
      <div className="mt-[9px] flex">
        <div className="flex flex-col gap-[5px]">
          <Select label="Font" value="Akzidenz-Grotesk..." className={font} />
          <Select label="Font style" value="Bold" className={font} />
        </div>
        <div className="ml-[3px] flex w-[21px] flex-col items-center gap-[2px]">
          <Svg w={17} h={19}>
            <path d="M2 18l1-4 7-7 2 2-7 7z" stroke="#b0b0b0" /><path d="M9 5l1-1 6 6-1 1zM12 5l2-3q2-2 3 0t-1 3l-2 3z" fill="#b0b0b0" stroke="#b0b0b0" />
          </Svg>
          <span className="mt-[2px] flex h-[17px] w-5 flex-col border border-[#b0b0b0] bg-white"><span className="h-2 border-b-2 border-[#b0b0b0] bg-black" /></span>
        </div>
        <Svg w={44} h={44} className="ml-1">
          <rect x="14.500" y="14.500" width="28" height="28" fill="#fff" stroke="#000" />
          <rect x="22" y="22" width="13" height="13" fill="#232323" stroke="#000" />
          <path d="M15 42L42 15" stroke="#c01515" strokeWidth="2" />
          <rect x="1.500" y=".5" width="28" height="29" fill="#e6c653" stroke="#000" />
          <rect x="2" y="32" width="10" height="10" fill="#eee" stroke="#888" />
          <path d="M3 41l8-8" stroke="#c01515" />
          <path d="M33 4q6 0 6 6M35 1l-3 3 3 3M36 9l3 4 3-4" stroke="#b0b0b0" strokeWidth="1.500" />
        </Svg>
      </div>

      <div className="mt-1 border-t-2 border-[#333]">
        <PairRow>
          <Metric icon={<span className={`font-bold ${t}`}><span className="text-[10px]">T</span><span className="text-[16px]">T</span></span>} value="46.9" unit="像素" />
          <Metric icon={<Svg w={16} h={18}><path d="M2 8v9M0 10l2-2 2 2M0 15l2 2 2-2M6 9.500h10M6 17.500h10M8 8l3-7 3 7M9 6h4M8 16l3-6 3 6" stroke="#b0b0b0" /></Svg>} value="166" unit="像素" />
        </PairRow>
        <PairRow>
          <Metric icon={<Svg w={18} h={17}><path d="M1 0l3 10L7 0M5 11L9 0M9 11l4-11 4 11M10 7h6M9 14.500h7M11 12.500l-2 2 2 2" stroke="#b0b0b0" strokeWidth="1.200" /></Svg>} unit="度量标准" dim />
          <Metric icon={<Svg w={18} h={17}><path d="M0 0h18v11H0z" fill="#b0b0b0" /><path d="M2 2l3 7 3-7M9 9l3-7 4 7M10 7h4" stroke="#222" strokeWidth="1.500" /><path d="M0 14.500h18M2 12.500l-2 2 2 2M16 12.500l2 2-2 2" stroke="#b0b0b0" /></Svg>} value="-31" unit="" />
        </PairRow>
      </div>

      <div className="mt-[6px] flex h-[31px] items-center border-y-2 border-[#333]">
        <Metric className="w-[86px]" icon={<Svg w={14} h={12}><path d="M0 1h14M0 5.500h14M0 10.500h14" stroke="#b0b0b0" strokeWidth="2" /></Svg>} value="-" unit="像素" />
        <Select label="Stroke order" value=" " className="ml-1 h-[19px] w-[106px] rounded-sm border border-[#333] bg-[#1c1c1c] text-[11px]" />
      </div>

      <div className="pt-[5px]">
        <PairRow>
          <Metric icon={<Svg w={18} h={15}><path d="M3 1v13M1 3l2-2 2 2M1 12l2 2 2-2" stroke="#b0b0b0" /><path d="M7 1h11v3h-1l-1-1h-2v10h2v1H9v-1h2V3H9L8 4H7z" fill="#b0b0b0" /></Svg>} value="100" unit="%" />
          <Metric icon={<Svg w={16} h={17}><path d="M2 0h12v3h-1l-1-1h-2v8h2v1H4v-1h2V2H4L3 3H2z" fill="#b0b0b0" /><path d="M0 14.500h16M2 12.500l-2 2 2 2M14 12.500l2 2-2 2" stroke="#b0b0b0" /></Svg>} value="100" unit="%" />
        </PairRow>
        <PairRow>
          <Metric icon={<Svg w={16} h={14}><path d="M1 9l3-8 3 8M2 6h4M0 11.500h8M12 13V7M10 9l2-2 2 2M10 2h3v3h-3V3.500h3" stroke="#b0b0b0" /></Svg>} value="0" unit="像素" />
          <Metric icon={<span className="text-[10px]">|あ|</span>} value="0" unit="%" />
        </PairRow>
      </div>

      <div className="mt-[7px] flex h-[31px] items-center border-t-2 border-[#333] pl-[19px] text-[#b0b0b0]">
        <button type="button" className={`w-6 text-[13px] font-bold ${t}`}>T</button>
        <button type="button" className={`ml-px w-6 text-[13px] italic ${t}`}>T</button>
        <button type="button" className={`ml-[6px] h-5 w-[25px] rounded-sm border border-[#333] bg-[#161616] text-[12px] text-[#2d8ceb] ${t}`}>TT</button>
        <button type="button" className={`ml-px w-6 text-[13px] ${t}`}>T<span className="text-[10px]">T</span></button>
        <button type="button" className={`ml-[6px] w-6 text-[13px] ${t}`}>T<sup className="text-[7px]">1</sup></button>
        <button type="button" className={`w-6 text-[13px] ${t}`}>T<sub className="text-[7px]">1</sub></button>
      </div>
      <div className="mt-[2px] flex h-5 items-center pl-[6px] text-[13px]">
        <label className="flex w-[98px] items-center gap-[5px]">
          <input type="checkbox" className="h-[14px] w-[14px] appearance-none rounded-sm border-2 border-[#8c8c8c]" />连字
        </label>
        <label className="flex items-center gap-1 whitespace-nowrap">
          <input type="checkbox" className="h-[14px] w-[14px] appearance-none rounded-sm border-2 border-[#8c8c8c]" />印地语数字
        </label>
      </div>
    </div>
  );
}

// line ends for each alignment glyph, top to bottom
const ALIGNMENTS = [
  { label: 'Left', d: 'M0 1h15M0 4h11M0 7h15M0 10h11M0 13h14' },
  { label: 'Center', d: 'M2 1h12M0 4h16M2 7h12M0 10h16M2 13h12', active: true },
  { label: 'Right', d: 'M0 1h15M4 4h11M0 7h15M4 10h11M1 13h14' },
  { label: 'Justify last left', d: 'M0 1h14M0 4h14M0 7h14M0 10h14M0 13h9', gap: 'ml-[6px]' },
  { label: 'Justify last center', d: 'M0 1h14M0 4h14M0 7h14M0 10h14M2 13h10' },
  { label: 'Justify last right', d: 'M0 1h14M0 4h14M0 7h14M0 10h14M5 13h9' },
  { label: 'Justify all', d: 'M0 1h14M0 4h14M0 7h14M0 10h14M0 13h14', gap: 'ml-[5px]' },
];

function ParagraphPanel() {
  return (
    <div className="pl-[5px] text-[#8c8c8c]">
      <div className="flex h-[23px] items-center">
        {ALIGNMENTS.map((a) => (
          <button
            key={a.label}
            type="button"
            aria-label={a.label}
            className={`mr-px flex h-[22px] w-6 shrink-0 items-center justify-center ${a.gap || ''} ${a.active ? 'rounded-sm border border-[#333] bg-[#161616] text-[#2d8ceb]' : 'text-[#b8b8b8]'}`}
          >
            <Svg w={16} h={15}><path d={a.d} transform="translate(0 .5)" stroke="currentColor" /></Svg>
          </button>
        ))}
      </div>
      <div className="mt-1 ml-[2px] flex w-[180px] border-t-2 border-[#333]" />
      <div className="ml-[2px] grid grid-cols-[73px_66px_60px] grid-rows-[18px_18px]">
        <Metric caret={false} className="[&>span:first-child]:w-[20px]" icon={<Svg w={16} h={15}><path d="M0 7h5M3 5l2 2-2 2M7.500 0v15M9 2h7M9 5h5M9 8h7M9 11h5M9 14h7" stroke="#b0b0b0" /></Svg>} value="0" unit="像素" />
        <Metric caret={false} className="[&>span:first-child]:w-[22px]" icon={<Svg w={16} h={15}><path d="M0 3h5M3 1l2 2-2 2M7 1.500h8v5H7zM8 10h8M8 13h6" stroke="#b0b0b0" /></Svg>} value="0" unit="像素" />
        <Metric caret={false} className="[&>span:first-child]:w-[22px]" icon={<Svg w={16} h={15}><path d="M0 2h5M3 0l2 2-2 2M9 2h7M6 5h10M6 8h10M6 11h10M6 14h8" stroke="#b0b0b0" /></Svg>} value="0" unit="像素" />
        <Metric caret={false} className="[&>span:first-child]:w-[20px]" icon={<Svg w={16} h={15}><path d="M0 2h7M0 5h5M0 8h7M0 11h5M0 14h7M8.500 0v15M16 7h-5M13 5l-2 2 2 2" stroke="#b0b0b0" /></Svg>} value="0" unit="像素" />
        <Metric caret={false} className="[&>span:first-child]:w-[22px]" icon={<Svg w={16} h={15}><path d="M8 1h8M8 4h6M8 7h8M7 9.500h8v5H7zM0 12h5M3 10l2 2-2 2" stroke="#b0b0b0" /></Svg>} value="0" unit="像素" />
        <div className="mt-2 flex items-center">
          <button type="button" aria-label="Left to right" className="flex h-[22px] w-[22px] items-center justify-center rounded-sm border border-[#333] bg-[#161616]">
            <Svg w={17} h={12}><path d="M0 2l5 4-5 4zM16 0h-5q-3 0-3 3t3 3v6h1.500V1h1v11H15V1h1z" fill="#2d8ceb" /></Svg>
          </button>
          <button type="button" aria-label="Right to left" className="ml-1">
            <Svg w={16} h={12}><path d="M16 2l-5 4 5 4zM9 0H4Q1 0 1 3t3 3v6h1.500V1h1v11H8V1h1z" fill="#b0b0b0" /></Svg>
          </button>
        </div>
      </div>
    </div>
  );
}

const Bar = ({ title, bright, menu }) => (
  <h2 className={`mr-[13px] flex h-7 items-center justify-between pr-[10px] pl-[13px] text-[13px] ${bright ? 'text-[#c0c0c0]' : 'text-[#8c8c8c]'}`}>
    {title}
    {menu && <PanelMenu className="text-[#b8b8b8]" />}
  </h2>
);

const Rule = () => <div className="mr-[13px] h-[2px] shrink-0 bg-[#191919]" />;

function RightColumn() {
  return (
    <section className="w-[219px] shrink-0 overflow-hidden bg-[#232323]">
      <Bar title="对齐" />
      <Rule />
      <Bar title="字符" bright menu />
      <div className="h-[286px]"><CharacterPanel /></div>
      {['效果和预设', '预览', '音频', '跟踪器'].map((s) => (
        <React.Fragment key={s}>
          <Rule />
          <Bar title={s} />
        </React.Fragment>
      ))}
      <Rule />
      <Bar title="段落" bright menu />
      <div className="mt-[3px]"><ParagraphPanel /></div>
    </section>
  );
}

// ---------- timeline ----------

const FIRST = -0.75;
const SPAN = 146.5;
const at = (frame) => `${((frame - FIRST) / SPAN) * 100}%`;
const between = (a, b) => `${((b - a) / SPAN) * 100}%`;

const TIMELINE_TABS = ['img-006DB2Culy1fo8uvj3ciug30m80go0wi', 'S', 'A1', 'K1', 'A1', 'A2', '*A1', 'finish', '1', '1', 'S', 'K'];

const ROWS = [
  { kind: 'layer', no: 1, name: '三角mask', icon: 'star', swatch: 'bg-[#6a80e0]', eye: false, trk: null, first: true, bars: [{ from: 0, to: 46, tone: 'bg-[#4d5788]' }] },
  { kind: 'layer', no: 2, name: '水花', icon: 'comp', swatch: 'bg-[#a89677]', eye: true, dim: true, trk: 'Alpha', bars: [{ from: 0, to: 46, tone: 'bg-[#6c6253]' }, { from: 46, to: 95, tone: 'bg-[#45403a] border border-[#5a5244]' }] },
  { kind: 'layer', no: 3, name: '[白色 纯色 1]', icon: 'solid', swatch: 'bg-[#b53838]', eye: true, open: true, selected: true, trk: '无', bars: [{ from: 0, to: 145.75, tone: 'bg-[#a44545] border-t border-[#d49090]' }] },
  { kind: 'opacity', name: '不透明度', value: '42' },
  { kind: 'layer', no: 4, name: 'A', icon: 'star', swatch: 'bg-[#6a80e0]', eye: true, dim: true, open: true, trk: 'Alpha', bars: [{ from: 45, to: 145.75, tone: 'bg-[#4d5788]' }] },
  { kind: 'contents', name: '内容' },
  { kind: 'prop', name: '多边星形 1', eye: true, mode: true, keys: [45, 58] },
  { kind: 'prop', name: '形状 2', eye: false, mode: true, keys: [54, 55, 58, 59, 60, 61, 65, 66, 69] },
  { kind: 'prop', name: '形状 1', eye: false, mode: true, keys: [45, 47, 53, 54, 55, 59, 60, 61, 65, 66, 69] },
  { kind: 'prop', name: '合并路径 1', eye: true },
  { kind: 'prop', name: '描边 1', eye: false, mode: true },
  { kind: 'prop', name: '填充 1', eye: true, mode: true },
  { kind: 'transform', name: '变换' },
];

const Eye = ({ on }) => (
  <button type="button" aria-label="Visibility" className="flex h-[14px] w-[13px] shrink-0 items-center justify-center bg-[#1c1c1c]">
    {on && <FaRegEye size={11} className="text-[#b8b8b8]" />}
  </button>
);

const Spiral = () => (
  <Svg w={13} h={13}>
    <path d="M7 6.500q-1-1.500-2 0t1 2.500q3 0 3-3t-4-3q-4 .5-4 4t4.500 4q5.500-.5 6-5 0-3-2-5" stroke="#a0a0a0" />
  </Svg>
);

function LayerRow({ row }) {
  const sel = row.selected;
  const cell = 'h-[18px] bg-[#1c1c1c] text-[13px] text-[#c0c0c0]';
  return (
    <div className={`flex items-center border-b border-[#1a1a1a] ${row.first ? 'h-[17px] overflow-hidden pb-[2px]' : 'h-5'} ${sel ? 'bg-[#484848]' : 'bg-[#303030]'}`}>
      <span className="w-1 shrink-0" />
      <Eye on={row.eye} />
      <span className="ml-[17px] h-[14px] w-[13px] shrink-0 bg-[#222]" />
      <span className="ml-[2px] h-[14px] w-[13px] shrink-0 bg-[#222]" />
      <span className="ml-[10px]"><Twirl open={row.open} /></span>
      <span className={`ml-[5px] h-[15px] w-[15px] shrink-0 ${row.swatch}`} />
      <span className="w-[36px] shrink-0 pl-[6px] text-[11px] font-bold text-[#b0b0b0]">{row.no}</span>
      <span className="flex w-4 shrink-0 items-center justify-center text-[#b8b8b8]">
        {row.icon === 'star' && <FaStar size={12} />}
        {row.icon === 'comp' && <CompIcon />}
        {row.icon === 'solid' && <span className="h-4 w-4 border border-black bg-white" />}
      </span>
      <Svg w={13} h={13} className="ml-[3px]">
        <rect x=".5" y=".5" width="12" height="12" fill="#333" stroke="#a0a0a0" />
        {row.dim
          ? <circle cx="6.500" cy="6.500" r="4" stroke="#777" strokeWidth="2" strokeDasharray="2 1" />
          : <circle cx="6.500" cy="6.500" r="3" fill="#b8b8b8" />}
      </Svg>
      <span className={`ml-[2px] flex h-[18px] w-[124px] shrink-0 items-center pl-[2px] text-[11px] leading-[14px] font-bold whitespace-pre text-[#b0b0b0] ${MONO} ${sel ? 'border-2 border-[#9a9a9a]' : 'border-2 border-transparent'}`}>
        {row.name}
      </span>
      <Select label={`${row.name} mode`} value="正常" className={`ml-[5px] w-[69px] pl-[7px] ${cell}`} />
      {row.trk ? (
        <>
          <span className="ml-[5px] h-[14px] w-[13px] shrink-0 bg-[#222]" />
          <Select label={`${row.name} track matte`} value={row.trk} className={`ml-[6px] w-[65px] pl-[6px] ${cell} ${row.trk === 'Alpha' ? 'text-[11px]!' : ''}`} />
        </>
      ) : <span className="w-[89px] shrink-0" />}
      <span className="ml-[8px]"><Spiral /></span>
      <Select label={`${row.name} parent`} value="无" className={`ml-[6px] w-[89px] pl-[6px] ${cell}`} />
    </div>
  );
}

function PropertyRow({ row }) {
  const base = 'flex h-5 items-center border-b border-[#1d1d1d] bg-[#262626] text-[11px] text-[#a0a0a0]';
  if (row.kind === 'opacity') {
    return (
      <div className={base}>
        <span className="ml-[129px]"><Stopwatch color="#b0b0b0" /></span>
        <span className="ml-1 flex h-[18px] w-[149px] items-center bg-[#484848] pl-1">{row.name}</span>
        <span className={`ml-[5px] text-[#2d8ceb] ${MONO}`}>{row.value}</span><span className="text-[9px]">%</span>
      </div>
    );
  }
  if (row.kind !== 'prop') {
    return (
      <div className={base}>
        <span className="ml-[93px]"><Twirl open={row.kind === 'contents'} /></span>
        <span className={`ml-3 ${row.kind === 'contents' ? 'w-[299px]' : 'w-[185px]'}`}>{row.name}</span>
        {row.kind === 'contents' ? (
          <button type="button" className="flex items-center gap-1">
            添加:
            <Svg w={11} h={11}><circle cx="5.500" cy="5.500" r="5.500" fill="#c0c0c0" /><path d="M4 2.500l4 3-4 3z" fill="#222" /></Svg>
          </button>
        ) : (
          <button type="button" className="text-[#2d8ceb] underline">重置</button>
        )}
      </div>
    );
  }
  return (
    <div className={base}>
      <span className="w-1 shrink-0" />
      <Eye on={row.eye} />
      <span className="ml-[96px]"><Twirl /></span>
      <span className={`ml-3 w-[165px] leading-[14px] ${MONO}`}>{row.name}</span>
      {row.mode && (
        <Select label={`${row.name} mode`} value="正常" className="h-[18px] w-[157px] border border-[#333] bg-[#1c1c1c] pl-[7px] text-[13px] leading-4 text-[#c0c0c0]" />
      )}
    </div>
  );
}

function TimelineOutline() {
  return (
    <div className="flex w-[593px] shrink-0 flex-col border-r border-black">
      <div className="flex h-9 shrink-0 items-center pl-[10px]">
        <div className="w-[94px] leading-none">
          <p className="text-[17px] leading-[19px] font-bold text-[#2d8ceb]">0:00:02:19</p>
          <p className="text-[10px] leading-[13px] text-[#1f5590]">00067 (24.00 fps)</p>
        </div>
        <label className="mb-px flex h-5 w-[287px] items-center rounded-sm border border-[#383838] bg-[#161616] pl-[6px]">
          <SearchGlyph />
          <input aria-label="Search layers" className="w-full bg-transparent text-[11px] text-[#b8b8b8] outline-none" />
        </label>
        <div className="mb-px ml-[15px] flex flex-1 items-center text-[#b0b0b0]">
          <Svg w={17} h={14}><path d="M0 3h6M7 3h5M9 3v7h4" stroke="#b0b0b0" strokeWidth="1.500" /><path d="M4 1h3v4H4zM12 1h4v4h-4zM12 7h4v4h-4zM12 12h5l-2.500 2z" fill="#b0b0b0" /></Svg>
          <Svg w={18} h={18} className="ml-4"><path d="M7 9l5-3 5 3v6l-5 3-5-3zM7 9l5 3 5-3M12 12v6M4 0v8M0 4h8M1 1l6 6M7 1L1 7" stroke="#b0b0b0" strokeWidth="1.200" /></Svg>
          <Svg w={16} h={14} className="ml-[17px]"><path d="M0 9h16v5H0z" fill="#1b4f86" /><path d="M1 7q2-5 7-5t7 5M8 0v12M1 7h14M4 5v4M12 5v4" stroke="#2d8ceb" strokeWidth="1.500" /></Svg>
          <Svg w={14} h={14} className="ml-[11px]"><path d="M4 0h10v11H4z" fill="#b0b0b0" /><path d="M.500 3v10.500H10M2.500 2v9.500H12" stroke="#b0b0b0" /><path d="M6 1v9M12 1v9" stroke="#222" strokeDasharray="1 1" /></Svg>
          <Svg w={16} h={14} className="ml-[11px]"><circle cx="5.500" cy="8.500" r="4.500" stroke="#b0b0b0" /><circle cx="8" cy="7" r="4.500" stroke="#b0b0b0" /><circle cx="10.500" cy="5.500" r="5" fill="#8a8a8a" stroke="#b0b0b0" /></Svg>
          <Svg w={17} h={15} className="ml-[19px]"><path d="M.500 2.500h15v12H.500zM4 0v2M8 0v2M12 0v2M2 5h3q2 0 3 3t5 4" stroke="#b0b0b0" strokeWidth="1.200" /></Svg>
        </div>
      </div>
      <div className="flex h-5 shrink-0 items-center border-y border-black bg-[#313131] text-[13px] text-[#b0b0b0]">
        <FaRegEye size={11} className="ml-[5px] shrink-0" />
        <FaVolumeUp size={12} className="ml-1 shrink-0" />
        <span className="ml-1 h-[7px] w-[7px] shrink-0 rounded-full bg-[#b0b0b0]" />
        <FaLock size={10} className="ml-[7px] shrink-0" />
        <span className="ml-[7px] h-3 w-px bg-[#1a1a1a]" />
        <FaTag size={11} className="ml-[13px] shrink-0 -scale-x-100" />
        <span className="ml-[7px] h-3 w-px bg-[#1a1a1a]" />
        <span className="ml-[5px] w-[26px] text-[11px]">#</span>
        <span className="h-3 w-px bg-[#1a1a1a]" />
        <span className="ml-[7px] w-[154px]">图层名称</span>
        <span className="h-3 w-px bg-[#1a1a1a]" />
        <span className="ml-[7px] w-[75px]">模式</span>
        <span className="w-[17px] text-[11px] text-[#8c8c8c]">T</span>
        <span className="w-[66px] text-[11px] text-[#8c8c8c]">TrkMat</span>
        <span className="h-3 w-px bg-[#1a1a1a]" />
        <span className="ml-[7px] flex-1">父级</span>
        <span className="mr-4 h-3 w-px bg-[#1a1a1a]" />
      </div>
      {ROWS.map((row, i) => (row.kind === 'layer' ? <LayerRow key={i} row={row} /> : <PropertyRow key={i} row={row} />))}
      <div className="flex h-[17px] shrink-0 items-center border-t border-black">
        <Svg w={12} h={12} className="ml-[6px]"><path d="M.5.5h7v7h-7zM2.500 2.500h7v7h-7zM4.500 4.500h7v7h-7zM8 6.500v3M6.500 8h3" stroke="#b0b0b0" fill="#232323" /></Svg>
        <span className="ml-1 flex h-4 w-4 items-center justify-center bg-[#161616]">
          <Svg w={12} h={12}><circle cx="4.500" cy="4.500" r="4" stroke="#2d8ceb" /><path d="M5 4.500h6v6H5z" stroke="#2d8ceb" strokeWidth="1.300" /></Svg>
        </span>
        <Svg w={11} h={12} className="ml-1"><path d="M3 0v2L0 5v2l3 3v2h2V0zM8 0v2l3 3v2l-3 3v2H6V0z" fill="#a0a0a0" /><path d="M5 0h1v12H5z" fill="#666" /></Svg>
        <button type="button" className="ml-[242px] h-4 w-[164px] rounded-sm border border-[#333] text-[11px] leading-none text-[#8c8c8c]">切换开关 /模式</button>
      </div>
    </div>
  );
}

const MARKERS = [{ f: 34, n: 1 }, { f: 37, n: 2 }, { f: 47, n: 3 }, { f: 49, n: 4 }];
const TICKS = [0, 12, 24, 36, 48, 60, 72, 84, 96, 108, 120, 132, 144];
const tickLabel = (f) => (f === 0 ? ':00f' : `${String(Math.floor(f / 24)).padStart(2, '0')}:${f % 24 ? '12' : '00'}f`);

const Cap = ({ flip, className }) => <span className={`absolute bg-[#2d8ceb] ${flip ? 'rounded-r-md' : 'rounded-l-md'} ${className}`} />;

function TimelineTracks() {
  return (
    <div className="flex min-w-0 flex-1 flex-col">
      <div className="relative min-w-0 overflow-hidden pt-[6px]">
        {/* navigator */}
        <div className="relative h-[10px] border-y border-black">
          <span className="absolute inset-y-0 bg-[#666]" style={{ left: at(0), width: between(0, 145) }} />
          <Cap className="left-0 h-full w-[6px]" />
          <Cap flip className="right-0 h-full w-[6px]" />
        </div>
        {/* time ruler */}
        <div className="relative h-5">
          {TICKS.map((f) => (
            <React.Fragment key={f}>
              <span className={`absolute bottom-0 w-px bg-[#777] ${f % 24 ? 'h-[5px]' : 'h-2'}`} style={{ left: at(f) }} />
              <span className={`absolute top-0 text-[10px] leading-4 text-[#a0a0a0] ${MONO} ${f === 0 ? '-ml-[7px]' : '-ml-5'}`} style={{ left: at(f) }}>
                {tickLabel(f)}
              </span>
            </React.Fragment>
          ))}
        </div>
        {/* work area */}
        <div className="relative h-4 border-b border-black">
          {[0, 12, 24].map((f) => (
            <span key={f} className="absolute top-0 h-[5px] w-px bg-[#777]" style={{ left: at(f) }} />
          ))}
          <span className="absolute top-0 h-full border-t border-[#777] bg-[#5f5f5f]" style={{ left: at(28), width: between(28, 145) }} />
          <span className="absolute top-0 h-full w-[5px]" style={{ left: at(27.3) }}><Cap className="inset-0" /></span>
          <Cap flip className="right-px h-full w-[5px]" />
          {MARKERS.map((m) => (
            <span key={m.n} className="absolute top-px" style={{ left: at(m.f) }}>
              <b className={`ml-px block h-3 w-[17px] rounded-[2px] border border-[#222] bg-[#b4b4b4] text-center text-[10px] leading-[10px] text-[#222] ${SERIF}`}>{m.n}</b>
              <svg width="10" height="8" className="absolute top-[6px] -left-[5px]"><path d="M5 0l5 4v4H0V4z" fill="#b4b4b4" stroke="#222" strokeWidth=".5" /></svg>
            </span>
          ))}
        </div>
        <div className="relative h-1 border-b border-black">
          <span className="absolute inset-y-0 bg-[#17bd1f]" style={{ left: at(58), width: between(58, 145) }} />
        </div>
        {/* rows */}
        <div className="relative">
          {ROWS.map((row, i) => (
            <div
              key={i}
              className={`relative border-b border-[#1c1c1c] ${row.first ? 'h-[17px]' : 'h-5'} ${row.selected ? 'bg-[#434343]' : row.kind === 'layer' ? 'bg-[#2d2d2d]' : 'bg-[#252525]'}`}
            >
              {row.bars && row.bars.map((b) => (
                <span key={b.from} className={`absolute bottom-px ${row.first ? 'top-0' : 'top-[2px]'} ${b.tone}`} style={{ left: at(b.from), width: between(b.from, b.to) }} />
              ))}
              {row.keys && row.keys.map((k) => (
                <span key={k} className="absolute top-[6px] z-10 -ml-[3px] h-[5px] w-[5px] rounded-full bg-[#b8b8b8]" style={{ left: at(k) }} />
              ))}
              {row.kind !== 'layer' && (
                <svg width="7" height="12" className="absolute top-[3px] z-10 -ml-[3px]" style={{ left: at(67) }}>
                  <path d="M0 .5h7M0 11.500h7M3.500 0v12" stroke={row.kind === 'opacity' ? '#2d8ceb' : '#b8b8b8'} strokeWidth={row.kind === 'opacity' ? 3 : 2} />
                </svg>
              )}
            </div>
          ))}
          <span className="absolute inset-y-0 bg-white/6" style={{ left: at(28), width: between(28, 145) }} />
        </div>
        {/* current time indicator */}
        <span className="absolute top-[6px] bottom-0 z-20 w-px bg-[#2d8ceb]" style={{ left: at(67) }} />
        <svg width="11" height="13" className="absolute top-[21px] z-20 -ml-[5px]" style={{ left: at(67) }}>
          <path d="M0 0h11v8l-4 5H4L0 8z" fill="#2d8ceb" />
          <path d="M5.500 6v7" stroke="#123" />
        </svg>
      </div>
      <div className="flex h-[17px] shrink-0 items-center">
        <Svg w={10} h={5} className="ml-[5px]"><path d="M0 5l2-2 1 1 3-4 4 5z" fill="#b0b0b0" /></Svg>
        <input
          type="range"
          aria-label="Timeline zoom"
          defaultValue="0"
          className="ml-[11px] h-[10px] w-[48px] appearance-none bg-transparent [&::-webkit-slider-runnable-track]:h-[2px] [&::-webkit-slider-runnable-track]:bg-[#444] [&::-webkit-slider-thumb]:-mt-1 [&::-webkit-slider-thumb]:h-[10px] [&::-webkit-slider-thumb]:w-[10px] [&::-webkit-slider-thumb]:appearance-none [&::-webkit-slider-thumb]:rounded-full [&::-webkit-slider-thumb]:border-2 [&::-webkit-slider-thumb]:border-[#a0a0a0] [&::-webkit-slider-thumb]:bg-[#232323]"
        />
        <Svg w={17} h={7} className="ml-3"><path d="M0 7l4-5 2 2-3 3zM5 7l6-7 6 7z" fill="#b0b0b0" /></Svg>
      </div>
    </div>
  );
}

function TimelinePanel() {
  return (
    <section className="mx-px shrink-0 border border-b-0 border-[#2d8ceb] bg-[#232323]">
      <div className="flex h-[26px] items-stretch pl-[25px] text-[11px] text-[#8c8c8c]">
        {TIMELINE_TABS.map((tab, i) =>
          tab.startsWith('*') ? (
            <div key={i} className="-ml-[15px] flex items-center border-b-2 border-[#b8b8b8] pt-[2px] text-[#c8c8c8]">
              <X size={7} />
              <span className="ml-2 h-[11px] w-[10px] bg-[#a89677]" />
              <button type="button" className="ml-3">{tab.slice(1)}</button>
              <PanelMenu className="ml-[9px]" />
            </div>
          ) : (
            <button key={i} type="button" className={`flex items-center gap-3 ${i === 7 ? 'ml-[35px]' : ''} ${i === 0 ? 'mr-[47px]' : 'mr-[53px]'}`}>
              <span className="h-[11px] w-[10px] bg-[#a89677]" />
              {tab}
            </button>
          )
        )}
      </div>
      <div className="flex">
        <TimelineOutline />
        <TimelineTracks />
        <div className="flex w-[17px] shrink-0 flex-col items-center pt-[38px] pb-[18px]">
          <Svg w={12} h={14}><path d="M0 0h12v9l-6 5-6-5z" fill="#b0b0b0" /></Svg>
          <Svg w={15} h={14} className="mt-[6px]"><path d="M7 3h8v8H7z" fill="#b0b0b0" /><path d="M0 10l7-9v6" stroke="#b0b0b0" strokeWidth="1.500" /><circle cx="7" cy="9" r="3.500" fill="#222" stroke="#b0b0b0" strokeWidth="1.500" /></Svg>
          <span className="mt-[5px] w-[15px] flex-1 rounded-full bg-[#313131]" />
        </div>
      </div>
    </section>
  );
}

export default function App() {
  return (
    <div className="flex h-screen flex-col overflow-hidden bg-[#161616] [font-family:'Open_Sans','Noto_Sans_CJK_SC',sans-serif]">
      <TitleBar />
      <Toolbar />
      <main className="mt-1 mb-[5px] flex min-h-0 flex-1 gap-1">
        <div className="ml-px flex w-[325px] shrink-0 flex-col gap-[5px]">
          <ProjectPanel />
          <RubberHosePanel />
        </div>
        <ViewerPanel />
        <div className="flex w-[266px] shrink-0 flex-col gap-1">
          <ButtCapperPanel />
          <JoysticksPanel />
        </div>
        <RightColumn />
      </main>
      <TimelinePanel />
      <div className="h-[2px] shrink-0 bg-[#12161c]" />
    </div>
  );
}
